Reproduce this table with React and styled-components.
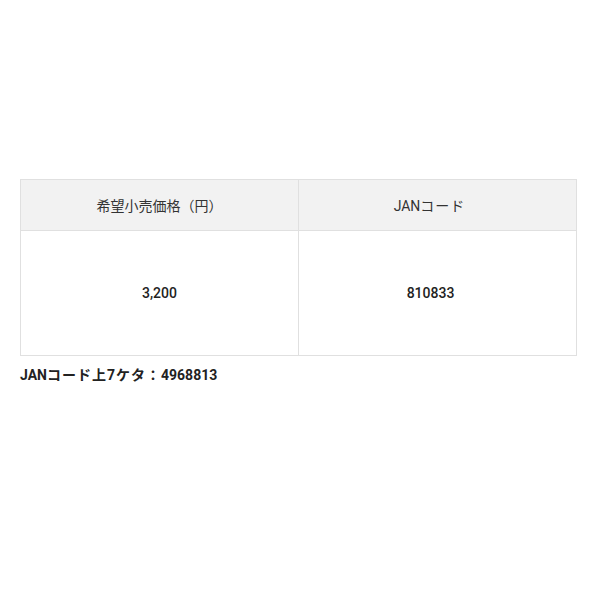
import React from "react";
import styled, { createGlobalStyle } from "styled-components";

const Global = createGlobalStyle`
  html, body { margin: 0; padding: 0; background: #fff; }
  body { font-family: Roboto, "Noto Sans CJK JP", sans-serif; color: #333; }
`;

const Page = styled.div`
  padding: 179px 23px 0 20px;
`;

const Table = styled.table`
  width: 557px;
  border-collapse: collapse;
  table-layout: fixed;
`;

const Th = styled.th`
  background: #f2f2f2;
  border: 1px solid #e0e0e0;
  height: 50px;
  padding: 0 ${(p) => p.$padRight || 0}px 0 0;
  font-size: 14px;
  font-weight: 400;
  color: #333;
  text-align: center;
  vertical-align: middle;
`;

const Td = styled.td`
  border: 1px solid #e0e0e0;
  height: 124px;
  padding: 0 ${(p) => p.$padRight || 0}px 0 0;
  font-size: 14px;
  font-weight: 500;
  color: #222;
  text-align: center;
  vertical-align: middle;
`;

const Note = styled.p`
  margin: 10px 0 0;
  font-size: 14px;
  font-weight: 700;
  color: #222;
  line-height: 18px;
`;

const Kana = styled.span`
  letter-spacing: ${(p) => p.$spacing}px;
`;

export default function App() {
  return (
    <>
      <Global />
      <Page>
        <Table>
          <thead>
            <tr>
              <Th>希望小売価格（円）</Th>
              <Th $padRight={16}>
                JAN<Kana $spacing={1}>コード</Kana>
              </Th>
            </tr>
          </thead>
          <tbody>
            <tr>
              <Td>3,200</Td>
              <Td $padRight={14}>810833</Td>
            </tr>
          </tbody>
        </Table>
        <Note>
          JAN<Kana $spacing={1}>コード上7ケタ：</Kana>4968813
        </Note>
      </Page>
    </>
  );
}
